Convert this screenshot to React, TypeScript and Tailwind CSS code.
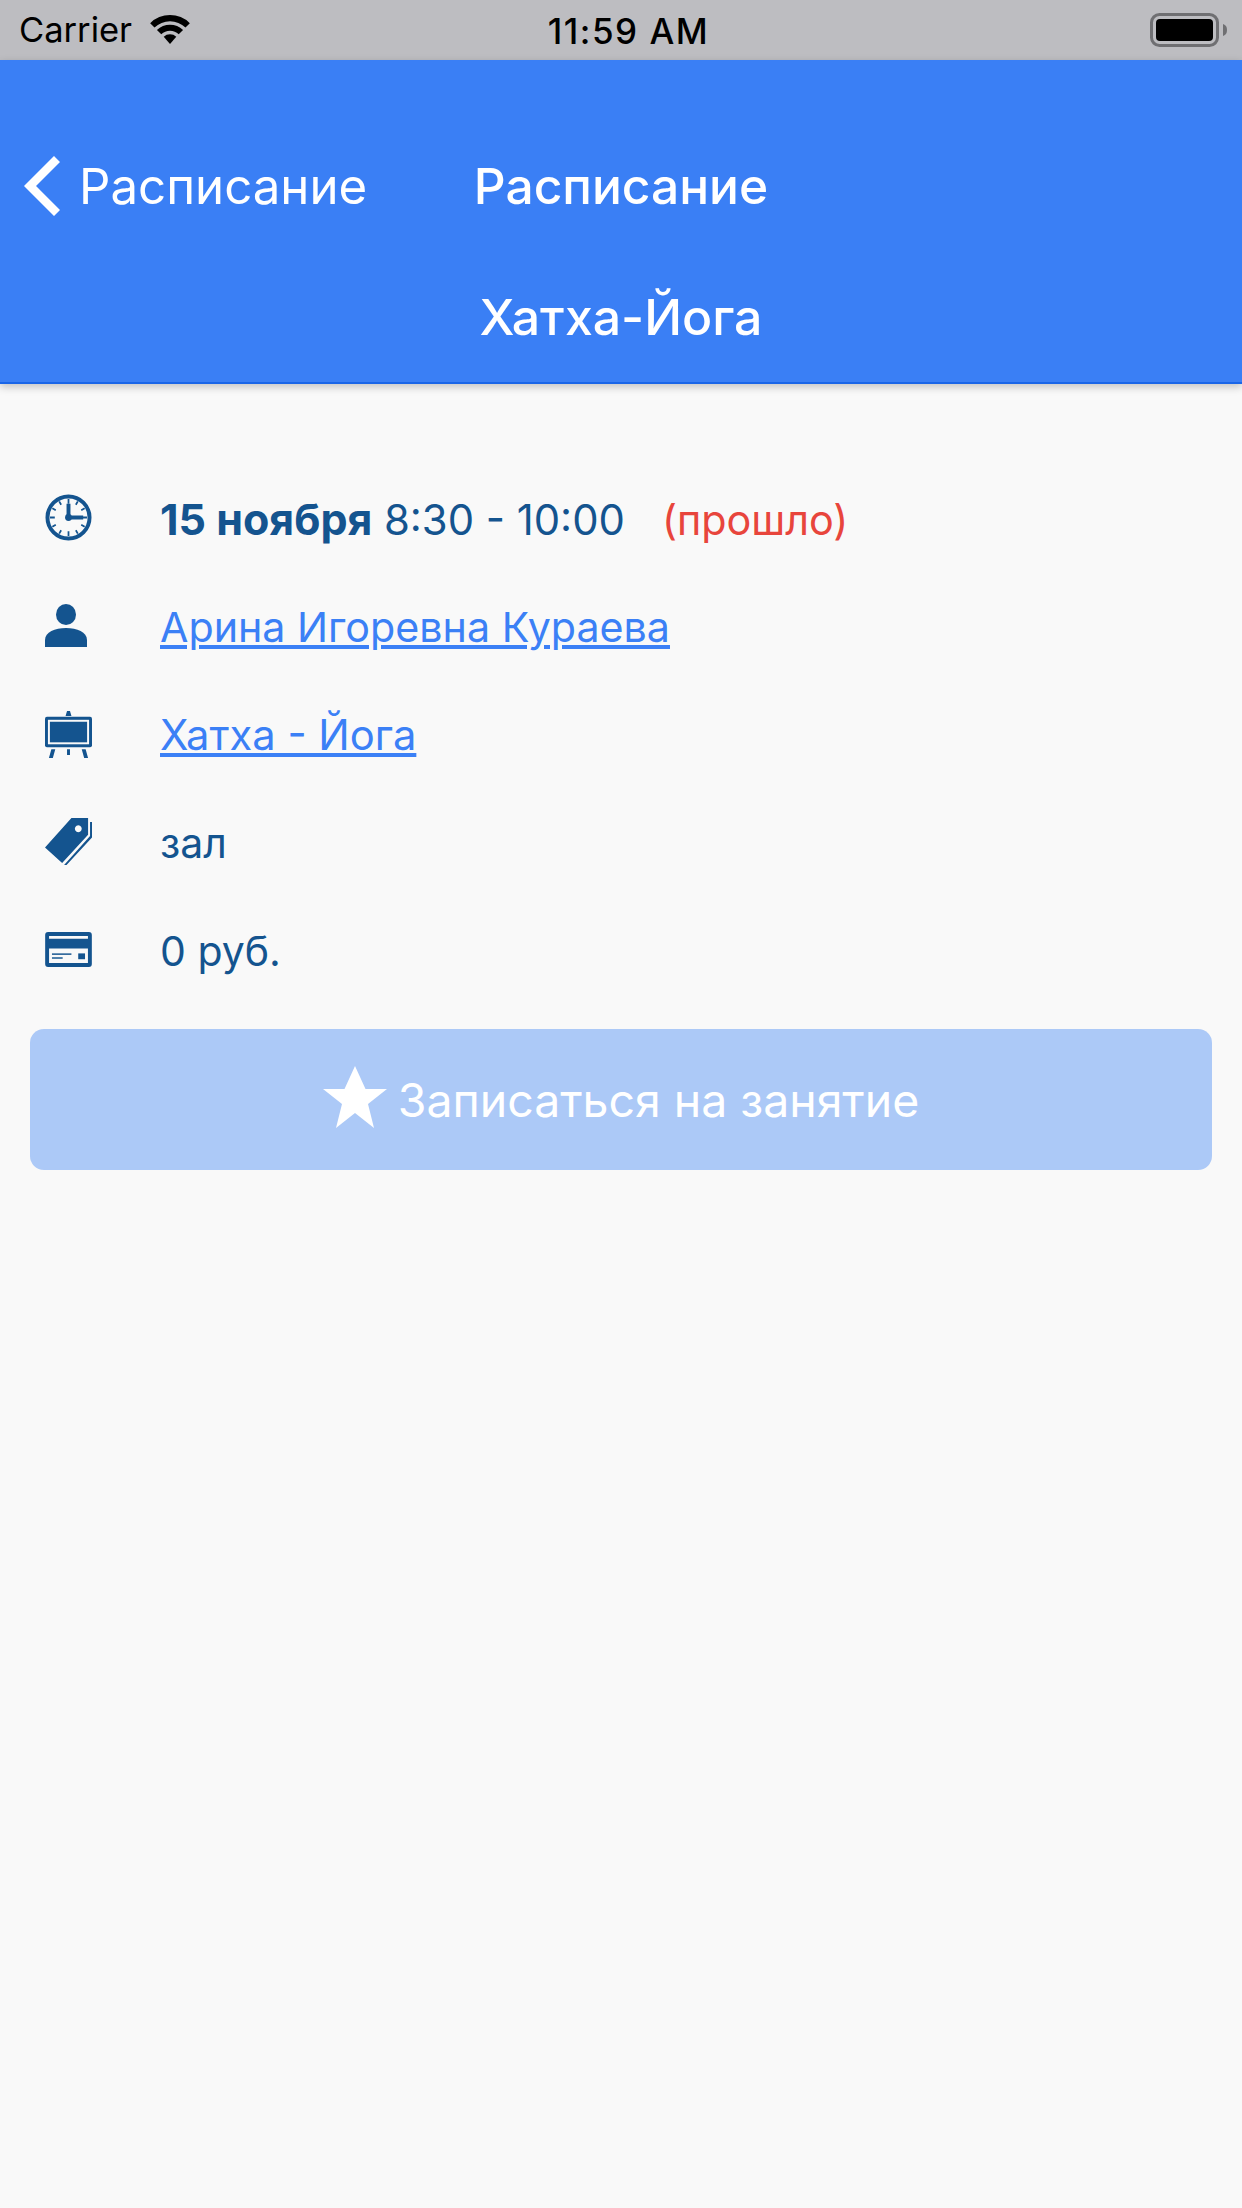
import React from "react";

const font = { fontFamily: "Inter, 'Noto Sans', sans-serif" };

function Wifi() {
  return (
    <svg width="42" height="30" viewBox="0 0 42 31" className="ml-[17px] mt-[-2px]">
      <path d="M0.5 9.500 A29 29 0 0 1 41.500 9.500 L37 14 A23 23 0 0 0 5 14 Z" fill="#000" />
      <path d="M7.500 16.500 A19.500 19.500 0 0 1 34.500 16.500 L30 21 A13 13 0 0 0 12 21 Z" fill="#000" />
      <path d="M14.500 23.500 A9.500 9.500 0 0 1 27.500 23.500 L21 31 Z" fill="#000" />
    </svg>
  );
}

function Battery() {
  return (
    <svg width="78" height="34" viewBox="0 0 78 34">
      <rect x="1.500" y="1.500" width="66" height="31" rx="8" fill="none" stroke="#6f6f72" strokeWidth="3" />
      <rect x="6" y="6" width="57" height="22" rx="4" fill="#000" />
      <path d="M73 11 C76 12 77 14 77 17 C77 20 76 22 73 23 Z" fill="#6f6f72" />
    </svg>
  );
}

function ClockIcon() {
  return (
    <svg width="47" height="47" viewBox="0 0 48 48" fill="none" stroke="#14548f">
      <circle cx="24" cy="24" r="21.500" strokeWidth="4" />
      <path d="M24 5v5M24 38v5M5 24h5M38 24h5M14.500 7.500l2 3.500M33.500 7.500l-2 3.500M14.500 40.500l2-3.500M33.500 40.500l-2-3.500M7.500 14.500l3.500 2M40.500 14.500l-3.500 2M7.500 33.500l3.500-2M40.500 33.500l-3.500-2" strokeWidth="1.800" />
      <path d="M24 10v14h15" strokeWidth="4" />
      <circle cx="24" cy="24" r="3.500" fill="#14548f" stroke="none" />
    </svg>
  );
}

function UserIcon() {
  return (
    <svg width="42" height="43" viewBox="0 0 42 43" fill="#14548f">
      <ellipse cx="21" cy="10.500" rx="10" ry="10.500" />
      <path d="M0 43v-7c0-8 10-12 21-12s21 4 21 12v7z" />
    </svg>
  );
}

function BoardIcon() {
  return (
    <svg width="47" height="48" viewBox="0 0 48 49" fill="#14548f">
      <path d="M21 6l1.500-5h3l1.500 5z" />
      <rect x="0" y="7" width="48" height="31" rx="2" />
      <rect x="4" y="11" width="40" height="23" fill="none" stroke="#f9f9f9" strokeWidth="2" />
      <path d="M6.500 40h4l-2.500 9h-4zM22.500 40h3v6h-3zM37.500 40h4l2.500 9h-4z" />
    </svg>
  );
}

function TagIcon() {
  return (
    <svg width="47" height="47" viewBox="0 0 48 48" fill="#14548f">
      <path fillRule="evenodd" d="M27 0H44V17L17.500 46L0 30ZM34 7.500a3.500 3.500 0 1 0 0.010 0Z" />
      <circle cx="34" cy="11" r="2" fill="#f9f9f9" />
      <path d="M46 4h2v16L22 48h-2.500L46 18.500z" />
    </svg>
  );
}

function CardIcon() {
  return (
    <svg width="47" height="35" viewBox="0 0 48 36" fill="#14548f">
      <path fillRule="evenodd" d="M3 0h42a3 3 0 0 1 3 3v30a3 3 0 0 1-3 3H3a3 3 0 0 1-3-3V3a3 3 0 0 1 3-3ZM4 4v3h40V4ZM4 17v15h40V17Z" />
      <rect x="34" y="22" width="7" height="6" />
      <rect x="7" y="22" width="20" height="1.500" />
      <rect x="7" y="26" width="11" height="1.500" />
    </svg>
  );
}

function Row({ icon, children }: { icon: React.ReactNode; children: React.ReactNode }) {
  return (
    <div className="flex h-[108px] items-center pl-[45px]">
      <div className="mt-[-3px] flex w-[115px] shrink-0 items-center">{icon}</div>
      <div className="text-[41px] leading-[48px] whitespace-nowrap text-[#14548f]">{children}</div>
    </div>
  );
}

export default function App() {
  return (
    <div className="flex h-[2208px] w-[1242px] flex-col overflow-hidden bg-[#f9f9f9]" style={font}>
      <div className="flex h-[60px] shrink-0 items-center justify-between bg-[#bdbdc1] pl-[19px] pr-[14px] text-black">
        <div className="flex w-[410px] items-center">
          <span className="text-[34.500px] leading-[40px]">Carrier</span>
          <Wifi />
        </div>
        <span className="mt-[1px] text-[35px] leading-[40px] font-medium tracking-[1.500px]">11:59 AM</span>
        <div className="flex w-[400px] justify-end">
          <Battery />
        </div>
      </div>

      <div className="relative z-10 flex h-[324px] shrink-0 flex-col border-b-[2px] border-[#1a66e8] bg-[#3a7ff5] text-white shadow-[0_3px_8px_rgba(0,0,0,0.22)]">
        <div className="relative mt-[64px] flex h-[124px] items-center justify-center">
          <div className="absolute left-[24px] flex items-center">
            <svg width="36" height="60" viewBox="0 0 36 60" fill="none" stroke="#fff" strokeWidth="8.500">
              <path d="M33 3L6 30l27 27" />
            </svg>
            <span className="ml-[19px] text-[49.200px] leading-[60px]">Расписание</span>
          </div>
          <span className="text-[49.700px] leading-[60px] font-medium">Расписание</span>
        </div>
        <div className="mt-[39px] text-center text-[50px] leading-[60px] font-medium">Хатха-Йога</div>
      </div>

      <div className="flex flex-col pt-[81px]">
        <Row icon={<ClockIcon />}>
          <span className="text-[43px] font-bold">15 ноября</span> <span className="text-[41.800px]">8:30 - 10:00</span>
          <span className="ml-[37px] text-[41.300px] text-[#e8453c]">(прошло)</span>
        </Row>
        <Row icon={<UserIcon />}>
          <a className="text-[41.200px] text-[#3b80f6] underline">Арина Игоревна Кураева</a>
        </Row>
        <Row icon={<BoardIcon />}>
          <a className="text-[41.700px] text-[#3b80f6] underline">Хатха - Йога</a>
        </Row>
        <Row icon={<TagIcon />}>зал</Row>
        <Row icon={<CardIcon />}>0 руб.</Row>
      </div>

      <div className="mx-[30px] mt-[24px] flex h-[141px] items-center justify-center rounded-[14px] bg-[#acc9f7] text-white">
        <svg width="64" height="62" viewBox="0 0 64 62" fill="#fff" className="mr-[11px] mt-[-6px]">
          <path d="M32 0L42.500 23H64L45 38 51 62 32 47 13 62 19 38 0 23H21.500z" />
        </svg>
        <span className="text-[46.400px] leading-[56px]">Записаться на занятие</span>
      </div>
    </div>
  );
}
